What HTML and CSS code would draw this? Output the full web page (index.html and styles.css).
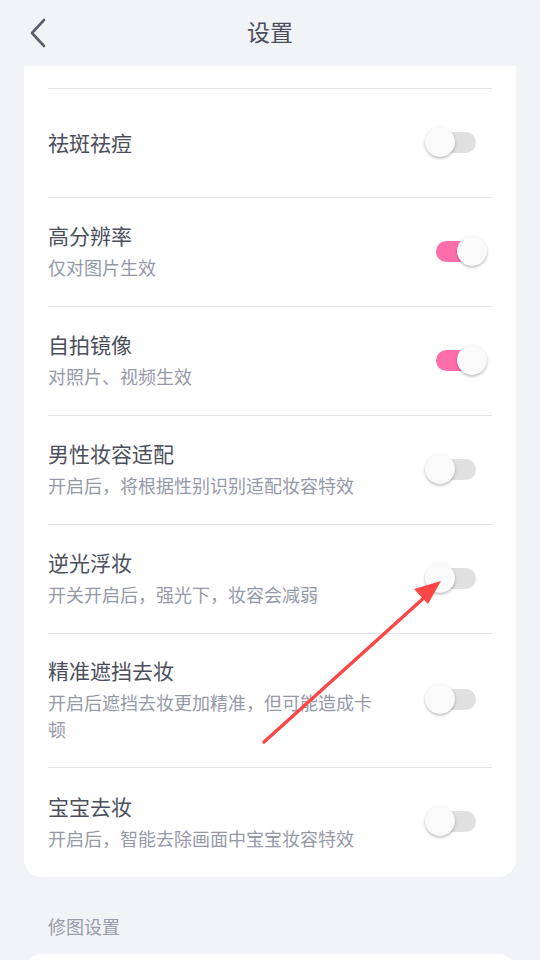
FILE: index.html
```html
<!DOCTYPE html>
<html lang="zh">
<head>
<meta charset="utf-8">
<link rel="stylesheet" href="styles.css">
</head>
<body>
<header class="topbar">
  <svg class="back" width="40" height="40" viewBox="0 0 40 40"><polyline points="24,7 12,20 24,33" fill="none" stroke="#5b5f6b" stroke-width="2.6" stroke-linecap="round" stroke-linejoin="round"/></svg>
  <h1 class="title">设置</h1>
</header>
<main class="content">
  <section class="card card-top">
    <div class="stub"></div>
    <div class="row">
      <div class="text"><div class="name">祛斑祛痘</div></div>
      <div class="switch"><span class="track"></span><span class="knob"></span></div>
    </div>
    <div class="row">
      <div class="text"><div class="name">高分辨率</div><div class="desc">仅对图片生效</div></div>
      <div class="switch on"><span class="track"></span><span class="knob"></span></div>
    </div>
    <div class="row">
      <div class="text"><div class="name">自拍镜像</div><div class="desc">对照片、视频生效</div></div>
      <div class="switch on"><span class="track"></span><span class="knob"></span></div>
    </div>
    <div class="row">
      <div class="text"><div class="name">男性妆容适配</div><div class="desc">开启后，将根据性别识别适配妆容特效</div></div>
      <div class="switch"><span class="track"></span><span class="knob"></span></div>
    </div>
    <div class="row">
      <div class="text"><div class="name">逆光浮妆</div><div class="desc">开关开启后，强光下，妆容会减弱</div></div>
      <div class="switch"><span class="track"></span><span class="knob"></span></div>
    </div>
    <div class="row">
      <div class="text"><div class="name">精准遮挡去妆</div><div class="desc">开启后遮挡去妆更加精准，但可能造成卡顿</div></div>
      <div class="switch"><span class="track"></span><span class="knob"></span></div>
    </div>
    <div class="row last">
      <div class="text"><div class="name">宝宝去妆</div><div class="desc">开启后，智能去除画面中宝宝妆容特效</div></div>
      <div class="switch"><span class="track"></span><span class="knob"></span></div>
    </div>
  </section>
  <div class="section-label">修图设置</div>
  <section class="card card-next"></section>
</main>
<svg class="annot" width="540" height="960" viewBox="0 0 540 960">
  <line x1="264" y1="742" x2="426" y2="596" stroke="#fd4646" stroke-width="3.4" stroke-linecap="round"/>
  <polygon points="414,589 441,581 428,604" fill="#fd4646"/>
</svg>
</body>
</html>
```
FILE: styles.css
```css
html, body {
  margin: 0;
  padding: 0;
}
body {
  background: #f2f3f7;
  font-family: "Noto Sans CJK SC", "Noto Sans", sans-serif;
  width: 540px;
  height: 960px;
  overflow: hidden;
  position: relative;
}
.topbar {
  height: 66px;
  display: flex;
  align-items: center;
  justify-content: center;
  position: relative;
}
.back {
  position: absolute;
  left: 20px;
  top: 13px;
}
.title {
  margin: 0 0 4px;
  font-size: 23px;
  font-weight: 400;
  color: #4b4f5b;
  line-height: 30px;
}
.content {
  padding: 0 24px;
}
.card {
  background: #fff;
  padding: 0 24px;
}
.card-top {
  border-radius: 0 0 18px 18px;
}
.stub {
  height: 22px;
  border-bottom: 1px solid #e4e4e6;
}
.row {
  min-height: 109px;
  box-sizing: border-box;
  padding: 21px 0 24px;
  display: flex;
  align-items: center;
  justify-content: space-between;
  border-bottom: 1px solid #e4e4e6;
}
.row.last {
  border-bottom: none;
  min-height: 109px;
}
.text {
  max-width: 332px;
}
.name {
  font-size: 21px;
  line-height: 30px;
  color: #4b4f5b;
}
.desc {
  margin-top: 4px;
  font-size: 18px;
  line-height: 27px;
  color: #9599a7;
}
.switch {
  position: relative;
  width: 62px;
  height: 30px;
  margin-right: 5px;
  flex: none;
}
.track {
  position: absolute;
  left: 11px;
  top: 5px;
  width: 40px;
  height: 21px;
  border-radius: 11px;
  background: #e0e0e0;
}
.knob {
  position: absolute;
  left: 0;
  top: 0;
  width: 30px;
  height: 30px;
  border-radius: 50%;
  background: #fafafa;
  box-shadow: 0 1.5px 3px rgba(0, 0, 0, 0.28);
}
.switch.on .track {
  background: #fd6eab;
}
.switch.on .knob {
  left: 32px;
}
.section-label {
  margin: 36px 0 0 24px;
  font-size: 18px;
  line-height: 26px;
  color: #979bab;
}
.card-next {
  margin-top: 15px;
  height: 60px;
  border-radius: 18px 18px 0 0;
}
.annot {
  position: absolute;
  left: 0;
  top: 0;
  pointer-events: none;
}
```
